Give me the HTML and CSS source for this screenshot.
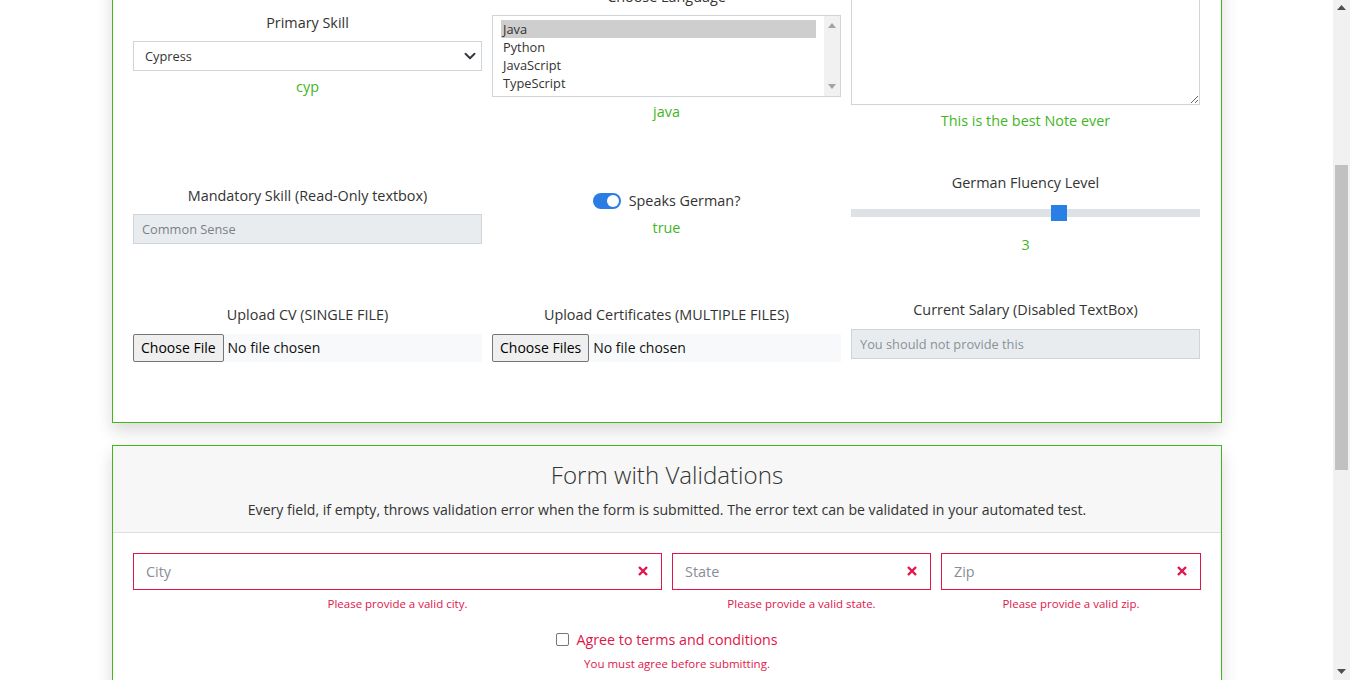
FILE: index.html
```html
<!DOCTYPE html>
<html lang="en">
<head>
<meta charset="utf-8">
<title>Practice Forms</title>
<link rel="stylesheet" href="styles.css">
</head>
<body>
<div class="page">
  <div class="container">
    <section class="card card-scrolled">
      <div class="card-body">
        <div class="row row-first">
          <div class="field f-skill">
            <label class="lbl">Primary Skill</label>
            <div class="select">
              <span>Cypress</span>
              <svg class="chev" width="12" height="12" viewBox="0 0 16 16"><path d="M2 5l6 6 6-6" fill="none" stroke="#343a40" stroke-width="2.6" stroke-linecap="round" stroke-linejoin="round"/></svg>
            </div>
            <div class="val">cyp</div>
          </div>
          <div class="field f-lang">
            <label class="lbl">Choose Language</label>
            <div class="listbox" role="listbox">
              <div class="options">
                <div class="opt selected">Java</div>
                <div class="opt">Python</div>
                <div class="opt">JavaScript</div>
                <div class="opt">TypeScript</div>
              </div>
              <div class="lb-scroll">
                <svg width="8" height="5" viewBox="0 0 8 5"><path d="M0 5L4 0L8 5Z" fill="#a3a3a3"/></svg>
                <svg width="8" height="5" viewBox="0 0 8 5"><path d="M0 0L4 5L8 0Z" fill="#a3a3a3"/></svg>
              </div>
            </div>
            <div class="val val-lang">java</div>
          </div>
          <div class="field f-notes">
            <label class="lbl">Notes</label>
            <textarea class="notes"></textarea>
            <div class="val">This is the best Note ever</div>
          </div>
        </div>

        <div class="row row-mid">
          <div class="field">
            <label class="lbl">Mandatory Skill (Read-Only textbox)</label>
            <input class="txt ro" type="text" readonly value="Common Sense">
          </div>
          <div class="field">
            <div class="toggle-line">
              <span class="switch"></span>
              <span class="toggle-lbl">Speaks German?</span>
            </div>
            <div class="val val-true">true</div>
          </div>
          <div class="field">
            <label class="lbl">German Fluency Level</label>
            <input class="range" type="range" min="0" max="5" value="3">
            <div class="val val-range">3</div>
          </div>
        </div>

        <div class="row row-last">
          <div class="field">
            <label class="lbl">Upload CV (SINGLE FILE)</label>
            <div class="file"><span class="file-btn">Choose File</span><span class="file-txt">No file chosen</span></div>
          </div>
          <div class="field">
            <label class="lbl">Upload Certificates (MULTIPLE FILES)</label>
            <div class="file"><span class="file-btn">Choose Files</span><span class="file-txt">No file chosen</span></div>
          </div>
          <div class="field f-salary">
            <label class="lbl">Current Salary (Disabled TextBox)</label>
            <input class="txt" type="text" disabled placeholder="You should not provide this">
          </div>
        </div>
      </div>
    </section>

    <section class="card card-val">
      <header class="card-head">
        <h3 class="title">Form with Validations</h3>
        <p class="sub">Every field, if empty, throws validation error when the form is submitted. The error text can be validated in your automated test.</p>
      </header>
      <div class="card-body val-body">
        <div class="vrow">
          <div class="vcol">
            <div class="vfield">
              <input class="vinput" type="text" placeholder="City">
              <svg class="xicon" width="10" height="10" viewBox="0 0 10 10"><path d="M1 1L9 9M9 1L1 9" stroke="currentColor" stroke-width="2.4"/></svg>
            </div>
            <div class="err">Please provide a valid city.</div>
          </div>
          <div class="vcol">
            <div class="vfield">
              <input class="vinput" type="text" placeholder="State">
              <svg class="xicon" width="10" height="10" viewBox="0 0 10 10"><path d="M1 1L9 9M9 1L1 9" stroke="currentColor" stroke-width="2.4"/></svg>
            </div>
            <div class="err">Please provide a valid state.</div>
          </div>
          <div class="vcol">
            <div class="vfield">
              <input class="vinput" type="text" placeholder="Zip">
              <svg class="xicon" width="10" height="10" viewBox="0 0 10 10"><path d="M1 1L9 9M9 1L1 9" stroke="currentColor" stroke-width="2.4"/></svg>
            </div>
            <div class="err">Please provide a valid zip.</div>
          </div>
        </div>
        <div class="agree">
          <input class="chk" type="checkbox" id="agree">
          <div class="agree-text">
            <label class="agree-lbl" for="agree">Agree to terms and conditions</label>
            <div class="err err-agree">You must agree before submitting.</div>
          </div>
        </div>
        <div class="spacer"></div>
      </div>
    </section>
  </div>
</div>

<div class="vscroll" aria-hidden="true">
  <svg class="arr arr-up" width="9" height="5" viewBox="0 0 9 5"><path d="M0 5L4.5 0L9 5Z" fill="#505050"/></svg>
  <div class="thumb"></div>
  <svg class="arr arr-down" width="9" height="5" viewBox="0 0 9 5"><path d="M0 0L4.5 5L9 0Z" fill="#505050"/></svg>
</div>
</body>
</html>
```

FILE: styles.css
```css
html, body {
  margin: 0;
  height: 100%;
  overflow: hidden;
  background: #fff;
}

body {
  font-family: "Open Sans", "Noto Sans", sans-serif;
  color: #333;
}

.page {
  width: calc(100% - 16px);
}

.container {
  width: 1110px;
  margin: 0 auto;
}

/* ---------- cards ---------- */
.card {
  background: #fff;
  border: 1px solid #43b51f;
  box-shadow: 0 8px 16px rgba(0, 0, 0, 0.15);
}

/* the page is scrolled: the top of the first card is above the viewport */
.card-scrolled {
  margin-top: -40px;
}

.card-body {
  padding: 0 20px 56px;
}

.row {
  display: grid;
  grid-template-columns: repeat(3, 349px);
  column-gap: 10px;
}

.row-first {
  align-items: start;
}

.row-mid {
  margin-top: 40px;
  align-items: center;
}

.row-last {
  margin-top: 43px;
  align-items: center;
}

.field {
  display: flex;
  flex-direction: column;
  text-align: center;
}

.lbl {
  display: block;
  font-size: 14.4px;
  line-height: 22px;
  color: #333;
}

.val {
  margin-top: 5px;
  font-size: 14.4px;
  line-height: 22px;
  color: #43b51f;
}

/* row 1 */
.f-skill {
  margin-top: 51px;
}

.f-lang {
  margin-top: 25px;
}

.select {
  margin-top: 7px;
  height: 30px;
  box-sizing: border-box;
  border: 1px solid #ced4da;
  display: flex;
  align-items: center;
  justify-content: space-between;
  padding: 0 5px 0 11px;
  font-size: 12.8px;
  color: #333;
}

.listbox {
  margin-top: 7px;
  height: 82px;
  box-sizing: border-box;
  border: 1px solid #ced4da;
  display: flex;
  text-align: left;
}

.options {
  flex: 1;
  padding: 4px 8px;
}

.opt {
  height: 18px;
  line-height: 18px;
  padding-left: 2px;
  font-size: 12.8px;
  color: #333;
}

.opt.selected {
  background: #cecece;
}

.lb-scroll {
  width: 16px;
  background: #f1f1f1;
  display: flex;
  flex-direction: column;
  justify-content: space-between;
  align-items: center;
  padding: 7px 0;
}

.val-lang {
  margin-top: 4px;
}

.notes {
  display: block;
  margin-top: 8px;
  height: 114px;
  width: 100%;
  box-sizing: border-box;
  border: 1px solid #ced4da;
  border-radius: 0;
  resize: vertical;
  font-family: inherit;
}

/* row 2 */
.txt {
  display: block;
  margin-top: 7px;
  width: 100%;
  height: 30px;
  box-sizing: border-box;
  border: 1px solid #ced4da;
  border-radius: 0;
  background: #e9ecef;
  padding: 0 8px;
  font-family: inherit;
  font-size: 12.8px;
  color: #7a8188;
  outline: none;
}

.txt::placeholder {
  color: #8a9198;
}

.toggle-line {
  display: flex;
  align-items: center;
  justify-content: center;
  gap: 8px;
  height: 22px;
  font-size: 14.4px;
}

.switch {
  width: 28px;
  height: 16px;
  border-radius: 8px;
  background: #2b7de6;
  position: relative;
  flex: none;
}

.switch::after {
  content: "";
  position: absolute;
  right: 2px;
  top: 2px;
  width: 12px;
  height: 12px;
  border-radius: 50%;
  background: #fff;
}

.range {
  -webkit-appearance: none;
  appearance: none;
  display: block;
  margin: 11px 0 0;
  width: 100%;
  height: 16px;
  background: transparent;
}

.range::-webkit-slider-runnable-track {
  height: 8px;
  background: #dee2e6;
  border: none;
}

.range::-webkit-slider-thumb {
  -webkit-appearance: none;
  width: 16px;
  height: 16px;
  margin-top: -4px;
  background: #2a7fe4;
  border: none;
  border-radius: 0;
}

.val-range {
  margin-top: 13px;
}

/* row 3 */
.file {
  margin-top: 8px;
  height: 28px;
  background: #f8f9fa;
  display: flex;
  align-items: stretch;
  text-align: left;
  font-size: 14px;
  color: #111;
}

.file-btn {
  display: flex;
  align-items: center;
  box-sizing: border-box;
  padding: 0 7px;
  background: #efefef;
  border: 1px solid #767676;
  border-radius: 2px;
  color: #000;
}

.file-txt {
  display: flex;
  align-items: center;
  margin-left: 4px;
}

.f-salary {
  margin-bottom: 7px;
}

.f-salary .txt {
  margin-top: 8px;
}

/* ---------- validation card ---------- */
.card-val {
  margin-top: 22px;
}

.card-head {
  background: #f7f7f7;
  border-bottom: 1px solid #dfdfdf;
  text-align: center;
  padding: 15px 20px 11px;
}

.title {
  margin: 0 0 10px;
  font-size: 24.1px;
  line-height: 28px;
  font-weight: 300;
  color: #333;
}

.sub {
  margin: 0;
  font-size: 14.1px;
  line-height: 22px;
  color: #333;
}

.val-body {
  padding-top: 20px;
}

.vrow {
  display: grid;
  grid-template-columns: 529fr 259fr 260fr;
  column-gap: 10px;
}

.vfield {
  position: relative;
}

.vinput {
  display: block;
  width: 100%;
  height: 37px;
  box-sizing: border-box;
  border: 1px solid #e0164a;
  border-radius: 0;
  padding: 0 30px 0 12px;
  font-family: inherit;
  font-size: 14.4px;
  color: #333;
  outline: none;
}

.vinput::placeholder {
  color: #878e95;
}

.xicon {
  position: absolute;
  right: 14px;
  top: 13px;
  color: #e0164a;
}

.err {
  margin-top: 6px;
  font-size: 11.5px;
  line-height: 16px;
  color: #e0164a;
  text-align: center;
}

.agree {
  margin-top: 17px;
  display: flex;
  justify-content: center;
  align-items: flex-start;
  gap: 7px;
}

.chk {
  -webkit-appearance: none;
  appearance: none;
  margin: 4px 0 0;
  width: 13px;
  height: 13px;
  box-sizing: border-box;
  border: 1px solid #767676;
  border-radius: 2px;
  background: #fff;
}

.agree-text {
  text-align: center;
}

.agree-lbl {
  display: block;
  font-size: 14.3px;
  line-height: 22px;
  color: #e0164a;
}

.err-agree {
  margin-top: 5px;
}

.spacer {
  height: 60px;
}

/* ---------- fake window scrollbar ---------- */
.vscroll {
  position: fixed;
  top: 0;
  right: 0;
  width: 17px;
  height: 100%;
  background: #f1f1f1;
}

.thumb {
  position: absolute;
  left: 2px;
  top: 165px;
  width: 13px;
  height: 305px;
  background: #c1c1c1;
}

.arr {
  position: absolute;
  left: 4px;
}

.arr-up {
  top: 5px;
}

.arr-down {
  bottom: 6px;
}
```
